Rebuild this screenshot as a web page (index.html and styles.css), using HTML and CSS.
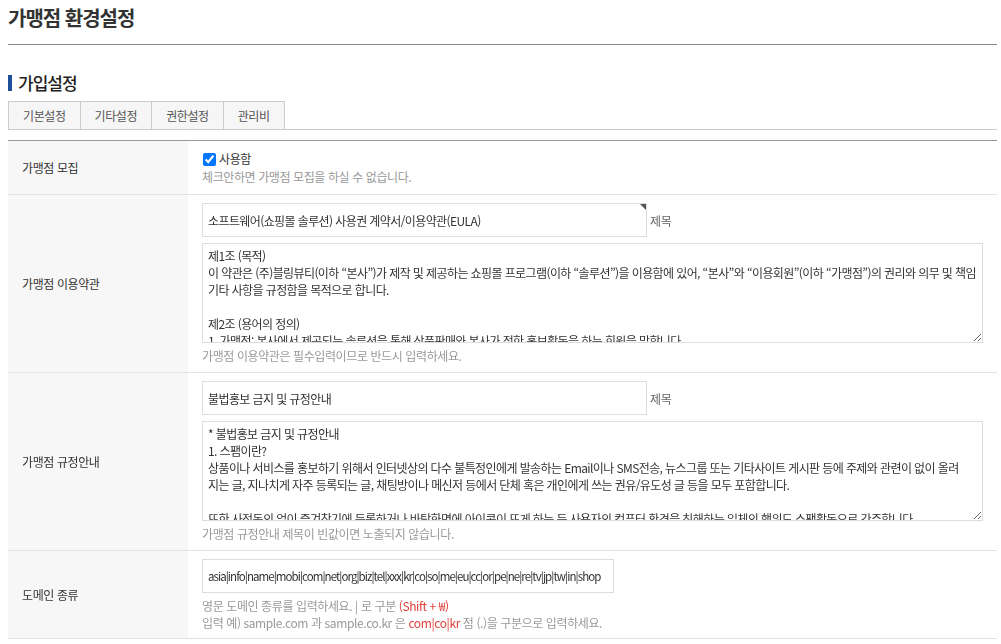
FILE: index.html
```html
<!DOCTYPE html>
<html lang="ko">
<head>
<meta charset="utf-8">
<title>가맹점 환경설정</title>
<link rel="stylesheet" href="styles.css">
</head>
<body>
<div class="page">
  <h1 class="page-title">가맹점 환경설정</h1>
  <h2 class="section-title">가입설정</h2>
  <ul class="tabs">
    <li class="tab">기본설정</li>
    <li class="tab">기타설정</li>
    <li class="tab">권한설정</li>
    <li class="tab">관리비</li>
  </ul>
  <div class="form">
    <div class="row">
      <div class="label">가맹점 모집</div>
      <div class="field field-first">
        <label class="check"><input type="checkbox" checked><span>사용함</span></label>
        <p class="help">체크안하면 가맹점 모집을 하실 수 없습니다.</p>
      </div>
    </div>
    <div class="row">
      <div class="label">가맹점 이용약관</div>
      <div class="field">
        <div class="input-line">
          <span class="input-wrap req"><input class="text" type="text" value="소프트웨어(쇼핑몰 솔루션) 사용권 계약서/이용약관(EULA)"></span>
          <span class="suffix">제목</span>
        </div>
        <textarea class="area">제1조 (목적)
이 약관은 (주)블링뷰티(이하 “본사”)가 제작 및 제공하는 쇼핑몰 프로그램(이하 “솔루션”)을 이용함에 있어, “본사”와 “이용회원”(이하 “가맹점”)의 권리와 의무 및 책임
기타 사항을 규정함을 목적으로 합니다.

제2조 (용어의 정의)
1. 가맹점: 본사에서 제공되는 솔루션을 통해 상품판매와 본사가 정한 홍보활동을 하는 회원을 말합니다.
2. 솔루션: 본사가 제작하여 가맹점에게 제공하는 쇼핑몰 프로그램을 말합니다.
3. 관리비: 가맹점이 솔루션을 이용하기 위하여 본사에 지급하는 비용을 말합니다.

제3조 (약관의 효력 및 변경)
1. 이 약관은 가맹점이 동의함으로써 효력이 발생합니다.
2. 본사는 필요한 경우 관련 법령을 위배하지 않는 범위에서 이 약관을 변경할 수 있습니다.
3. 변경된 약관은 공지사항을 통해 게시합니다.</textarea>
        <p class="help">가맹점 이용약관은 필수입력이므로 반드시 입력하세요.</p>
      </div>
    </div>
    <div class="row">
      <div class="label">가맹점 규정안내</div>
      <div class="field">
        <div class="input-line">
          <span class="input-wrap"><input class="text" type="text" value="불법홍보 금지 및 규정안내"></span>
          <span class="suffix">제목</span>
        </div>
        <textarea class="area">* 불법홍보 금지 및 규정안내
1. 스팸이란?
상품이나 서비스를 홍보하기 위해서 인터넷상의 다수 불특정인에게 발송하는 Email이나 SMS전송, 뉴스그룹 또는 기타사이트 게시판 등에 주제와 관련이 없이 올려
지는 글, 지나치게 자주 등록되는 글, 채팅방이나 메신저 등에서 단체 혹은 개인에게 쓰는 권유/유도성 글 등을 모두 포함합니다.

또한 사전동의 없이 즐겨찾기에 등록하거나 바탕화면에 아이콘이 뜨게 하는 등 사용자의 컴퓨터 환경을 침해하는 일체의 행위도 스팸활동으로 간주합니다.

2. 불법홍보 금지
가맹점은 스팸 등 불법적인 방법으로 쇼핑몰을 홍보할 수 없습니다.
위반 시 사전 통보 없이 가맹점 자격이 정지될 수 있습니다.

3. 기타
본 규정에 명시되지 않은 사항은 관련 법령 및 본사 정책에 따릅니다.</textarea>
        <p class="help">가맹점 규정안내 제목이 빈값이면 노출되지 않습니다.</p>
      </div>
    </div>
    <div class="row">
      <div class="label">도메인 종류</div>
      <div class="field">
        <input class="text text-domain" type="text" value="asia|info|name|mobi|com|net|org|biz|tel|xxx|kr|co|so|me|eu|cc|or|pe|ne|re|tv|jp|tw|in|shop">
        <p class="help help-tight">영문 도메인 종류를 입력하세요. | 로 구분 <span class="red">(Shift + ₩)</span><br>입력 예) sample.com 과 sample.co.kr 은 <span class="red">com|co|kr</span> 점 (.)을 구분으로 입력하세요.</p>
      </div>
    </div>
  </div>
</div>
</body>
</html>
```
FILE: styles.css
```css
html, body {
  margin: 0;
  padding: 0;
  background: #fff;
}

body {
  font-family: "Noto Sans CJK KR", "Noto Sans", "Liberation Sans", sans-serif;
  font-size: 12px;
  color: #333;
  letter-spacing: -0.4px;
}

.page {
  padding: 0 4px 0 8px;
}

.page-title {
  margin: 0;
  padding: 6px 0 14px;
  font-size: 20px;
  line-height: 24px;
  font-weight: 700;
  color: #333;
  border-bottom: 1px solid #888;
  letter-spacing: -1px;
}

.section-title {
  margin: 28px 0 8px;
  display: flex;
  align-items: center;
  gap: 6px;
  font-size: 17px;
  line-height: 20px;
  font-weight: 500;
  color: #222;
  letter-spacing: -1px;
}

.section-title::before {
  content: "";
  width: 4px;
  height: 16px;
  background: #1f4e9b;
}

.tabs {
  display: flex;
  list-style: none;
  margin: 0;
  padding: 0;
  border-bottom: 1px solid #ccc;
}

.tab {
  height: 27px;
  line-height: 27px;
  padding: 0 14px;
  border: 1px solid #ccc;
  border-bottom: none;
  margin-left: -1px;
  background: #f6f6f6;
  color: #555;
}

.tab:first-child {
  margin-left: 0;
}

.form {
  margin-top: 10px;
  border-top: 1px solid #999;
}

.row {
  display: grid;
  grid-template-columns: 180px 1fr;
  border-bottom: 1px solid #e3e3e3;
}

.label {
  background: #f7f7f7;
  padding-left: 14px;
  display: flex;
  align-items: center;
  color: #333;
}

.field {
  padding: 8px 14px 7px;
}

.field-first {
  padding: 9px 14px 8px;
}

.check {
  display: flex;
  align-items: center;
  height: 18px;
  line-height: 18px;
}

.check input {
  width: 13px;
  height: 13px;
  margin: 0 3px 0 1px;
}

.help {
  margin: 0;
  color: #999;
  line-height: 18px;
}

.field .input-line + .area + .help {
  margin-top: 4px;
}

.help-tight {
  margin-top: 4px;
  line-height: 17px;
}

.red {
  color: #e0403a;
}

.input-line {
  display: flex;
  align-items: center;
  gap: 3px;
}

.input-wrap {
  position: relative;
  display: block;
}

.input-wrap.req::after {
  content: "";
  position: absolute;
  top: 1px;
  right: 1px;
  border-top: 6px solid #555;
  border-left: 6px solid transparent;
}

.suffix {
  color: #666;
}

.text {
  display: block;
  width: 445px;
  height: 34px;
  box-sizing: border-box;
  border: 1px solid #ddd;
  padding: 0 5px;
  font: inherit;
  letter-spacing: -0.6px;
  color: #333;
  background: #fff;
  outline: none;
}

.text-domain {
  width: 412px;
  font-size: 11.5px;
  letter-spacing: -0.95px;
}

.area {
  display: block;
  width: 781px;
  height: 100px;
  box-sizing: border-box;
  margin: 6px 0 0;
  border: 1px solid #ddd;
  padding: 3px 5px;
  font: inherit;
  letter-spacing: -0.6px;
  line-height: 17px;
  color: #333;
  background: #fff;
  outline: none;
}

.area::-webkit-scrollbar {
  width: 10px;
}

.area::-webkit-scrollbar-track {
  background: #fff;
}

.area::-webkit-scrollbar-thumb {
  background: #c1c1c1;
  border-radius: 5px;
  border: 2px solid #fff;
}

.area::-webkit-scrollbar-corner {
  background: #fff;
}
```
